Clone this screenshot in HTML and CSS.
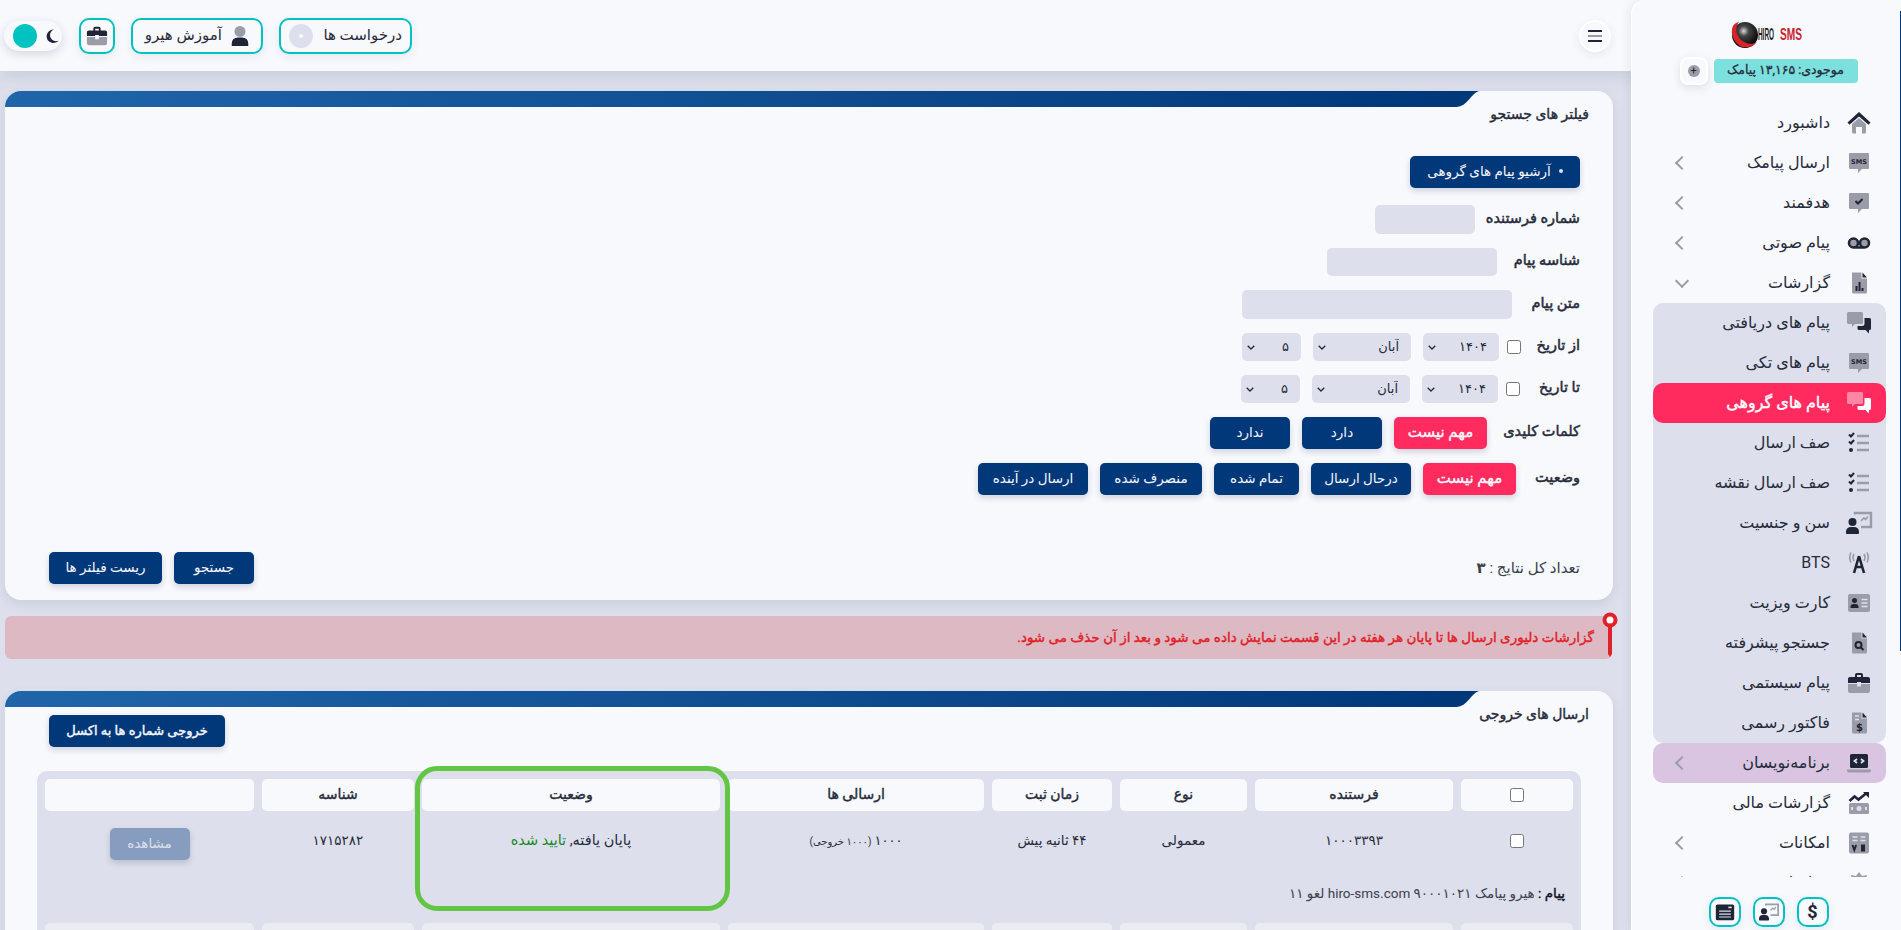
FILE: index.html
```html
<!DOCTYPE html>
<html lang="fa" dir="rtl">

<head>
    <meta charset="UTF-8">
    <meta name="viewport" content="width=device-width, initial-scale=1.0">
    <title>هیرو پیامک</title>
    <link rel="stylesheet" href="styles.css">
</head>

<body>
    <!-- آیکون ها -->
    <svg class="icon-defs" aria-hidden="true">
        <symbol id="i-home" viewBox="0 0 24 24">
            <path class="ig" d="M5 13l7-6 7 6v8a1.500 1.500 0 0 1-1.500 1.500H15V16H9v6.500H6.500A1.500 1.500 0 0 1 5 21z" />
            <path class="id" d="M12 1l11.500 10.500-2 2.200L12 5.500l-9.500 8.200-2-2.200z" />
        </symbol>
        <symbol id="i-sms" viewBox="0 0 24 24">
            <path class="ig" d="M3 2h18a1 1 0 0 1 1 1v14a1 1 0 0 1-1 1h-6l-4 4v-4H3a1 1 0 0 1-1-1V3a1 1 0 0 1 1-1z" />
            <text class="id icon-text" x="12" y="12.500" text-anchor="middle">SMS</text>
        </symbol>
        <symbol id="i-check" viewBox="0 0 24 24">
            <path class="ig" d="M3 2h18a1 1 0 0 1 1 1v14a1 1 0 0 1-1 1h-6l-4 4v-4H3a1 1 0 0 1-1-1V3a1 1 0 0 1 1-1z" />
            <path class="is" d="M8.500 10l2.500 2.500 4.500-4.500" />
        </symbol>
        <symbol id="i-voice" viewBox="0 0 24 24">
            <circle class="ig" cx="6.500" cy="12" r="4" />
            <circle class="ig" cx="17.500" cy="12" r="4" />
            <path class="is is-thick" d="M6.500 16.500h11M6.500 7.500a4.500 4.500 0 1 0 0 9 4.500 4.500 0 0 0 0-9zM17.500 7.500a4.500 4.500 0 1 0 0 9 4.500 4.500 0 0 0 0-9z" />
        </symbol>
        <symbol id="i-file-chart" viewBox="0 0 24 24">
            <path class="ig" d="M5 1.500h9.500v6H20V21a1.500 1.500 0 0 1-1.500 1.500h-12A1.500 1.500 0 0 1 5 21z" />
            <path class="id" d="M15.500 1.500l4.500 5h-4.500zM8.500 15h2v5h-2zM11.500 11h2v9h-2zM14.500 17h2v3h-2z" />
        </symbol>
        <symbol id="i-comments" viewBox="0 0 26 24">
            <path class="ig" d="M2.500 1h13A1.500 1.500 0 0 1 17 2.500v9a1.500 1.500 0 0 1-1.500 1.500H9l-3 3v-3H2.500A1.500 1.500 0 0 1 1 11.500v-9A1.500 1.500 0 0 1 2.500 1z" />
            <path class="id" d="M18.500 7h5A1.500 1.500 0 0 1 25 8.500v9a1.500 1.500 0 0 1-1.500 1.500H23v3.500L19.500 19H13a1.500 1.500 0 0 1-1.500-1.500V15H16a2.500 2.500 0 0 0 2.500-2.500z" />
        </symbol>
        <symbol id="i-list" viewBox="0 0 24 24">
            <path class="is" d="M2 3.500l2 2 3-3.500M2 10.500l2 2 3-3.500" />
            <circle class="id" cx="4" cy="19" r="2" />
            <path class="ig-line" d="M10 5h12M10 12h12M10 19h12" />
        </symbol>
        <symbol id="i-board" viewBox="0 0 26 24">
            <path class="ig-line" d="M9 3.500V2h16v14H15" />
            <path class="ig-line ig-thin" d="M15 10l3-3 1.500 1.500L22 5.500" />
            <circle class="id" cx="6.500" cy="11" r="4" />
            <path class="id" d="M0 22v-1.500A5 5 0 0 1 5 16h3a5 5 0 0 1 5 4.500V22a1 1 0 0 1-1 1H1a1 1 0 0 1-1-1z" />
        </symbol>
        <symbol id="i-tower" viewBox="0 0 24 24">
            <path class="ig-line ig-thin" d="M4 1.500a11 11 0 0 0 0 10M20 1.500a11 11 0 0 1 0 10M7 3a7 7 0 0 0 0 7M17 3a7 7 0 0 1 0 7" />
            <path class="is is-thick" d="M12 5l-5 17M12 5l5 17M8.500 16h7" />
        </symbol>
        <symbol id="i-card" viewBox="0 0 24 24">
            <rect class="ig" x="1" y="3" width="22" height="18" rx="2" />
            <circle class="id" cx="7.500" cy="9.500" r="2.500" />
            <path class="id" d="M3.500 17v-1a3 3 0 0 1 3-3h2a3 3 0 0 1 3 3v1z" />
            <path class="iw-line" d="M14.500 8.500h6M14.500 12h6M14.500 15.500h6" />
        </symbol>
        <symbol id="i-file-search" viewBox="0 0 24 24">
            <path class="ig" d="M5 1.500h9.500v6H20V21a1.500 1.500 0 0 1-1.500 1.500h-12A1.500 1.500 0 0 1 5 21z" />
            <path class="id" d="M15.500 1.500l4.500 5h-4.500z" />
            <circle class="is" cx="11.500" cy="14" r="3" />
            <path class="is" d="M13.700 16.200l2.800 2.800" />
        </symbol>
        <symbol id="i-case" viewBox="0 0 24 24">
            <path class="ig" d="M1 13h9v2.500h4V13h9v7a2 2 0 0 1-2 2H3a2 2 0 0 1-2-2z" />
            <path class="id" d="M8 6V4a2 2 0 0 1 2-2h4a2 2 0 0 1 2 2v2h5a2 2 0 0 1 2 2v4h-9v-1h-4v1H1V8a2 2 0 0 1 2-2zm2 0h4V4h-4z" />
        </symbol>
        <symbol id="i-invoice" viewBox="0 0 24 24">
            <path class="ig" d="M5 1.500h9.500v6H20V21a1.500 1.500 0 0 1-1.500 1.500h-12A1.500 1.500 0 0 1 5 21z" />
            <path class="id" d="M15.500 1.500l4.500 5h-4.500z" />
            <path class="iw-line" d="M8 5h4M8 8.500h4" />
            <text class="id icon-dollar" x="12.500" y="19.500" text-anchor="middle">$</text>
        </symbol>
        <symbol id="i-laptop" viewBox="0 0 26 24">
            <rect class="id" x="4" y="3" width="18" height="14" rx="1.500" />
            <path class="ig" d="M1 18.500h24v1a2 2 0 0 1-2 2H3a2 2 0 0 1-2-2z" />
            <path class="iw-line iw-code" d="M11 8l-2.500 2 2.500 2M15 8l2.500 2-2.500 2" />
        </symbol>
        <symbol id="i-money" viewBox="0 0 24 24">
            <rect class="ig" x="2" y="12" width="20" height="11" rx="1.500" />
            <circle class="iw" cx="12" cy="17.500" r="2.500" />
            <path class="iw" d="M4 16h2v3H4zM18 16h2v3h-2z" />
            <path class="is is-thick" d="M2.500 10l5-4.500 4 3L19 2.500" />
            <path class="id" d="M16 1h6v6z" />
        </symbol>
        <symbol id="i-calc" viewBox="0 0 24 24">
            <rect class="ig" x="2" y="1.500" width="20" height="21" rx="2" />
            <path class="iw-line" d="M5.500 6h5M13.500 6h5M5.500 9.500h5M13.500 9.500h5" />
            <path class="is" d="M5.500 14l1.800 5 1.800-5" />
            <path class="id" d="M14 13.500h4v7h-4z" />
        </symbol>
        <symbol id="i-gear" viewBox="0 0 24 24">
            <path class="ig" d="M12 1l3 4 5-1-1 5 4 3-4 3 1 5-5-1-3 4-3-4-5 1 1-5-4-3 4-3-1-5 5 1z" />
        </symbol>
        <symbol id="i-user" viewBox="0 0 24 24">
            <circle class="ig" cx="12" cy="7" r="6" />
            <path class="id" d="M3 23v-3a6.500 6.500 0 0 1 6.500-6.500h5A6.500 6.500 0 0 1 21 20v3z" />
        </symbol>
        <symbol id="i-window" viewBox="0 0 24 24">
            <path class="id" d="M3 3h18a2 2 0 0 1 2 2v15a2 2 0 0 1-2 2H3a2 2 0 0 1-2-2V5a2 2 0 0 1 2-2z" />
            <path class="iw-line" d="M5 11h14M5 14.500h14M5 18h14" />
            <path class="iw" d="M16 5.500h4v2h-4z" />
        </symbol>
    </svg>

    <div class="layout">
        <!-- منوی کناری -->
        <aside class="sidebar">
            <span class="scroll-thumb"></span>

            <div class="logo">
                <svg width="72" height="30" viewBox="0 0 72 30">
                    <defs>
                        <radialGradient id="ball" cx="45%" cy="35%" r="65%">
                            <stop offset="0" stop-color="#d9d9d9" />
                            <stop offset="0.3" stop-color="#444" />
                            <stop offset="1" stop-color="#000" />
                        </radialGradient>
                    </defs>
                    <circle cx="15" cy="15" r="13" fill="url(#ball)" />
                    <path d="M2 9C3 4 7 2 9 2 5 6 5 14 11 20c5 4 11 5 16 2-4 5-10 6-15 5C5 24 1 16 2 9z" fill="#d8232a" />
                    <text class="logo-hiro" x="28" y="20" textLength="16" lengthAdjust="spacingAndGlyphs">HIRO</text>
                    <text class="logo-sms" x="50" y="20" textLength="22" lengthAdjust="spacingAndGlyphs">SMS</text>
                </svg>
            </div>

            <div class="balance-row">
                <div class="balance">موجودی: ۱۳,۱۶۵ پیامک</div>
                <button class="balance-add"><span>+</span></button>
            </div>

            <nav class="menu">
                <a class="menu-item"><svg class="menu-icon"><use href="#i-home" /></svg><span>داشبورد</span></a>
                <a class="menu-item has-arrow"><svg class="menu-icon"><use href="#i-sms" /></svg><span>ارسال پیامک</span><i class="arrow"></i></a>
                <a class="menu-item has-arrow"><svg class="menu-icon"><use href="#i-check" /></svg><span>هدفمند</span><i class="arrow"></i></a>
                <a class="menu-item has-arrow"><svg class="menu-icon"><use href="#i-voice" /></svg><span>پیام صوتی</span><i class="arrow"></i></a>
                <a class="menu-item has-arrow"><svg class="menu-icon"><use href="#i-file-chart" /></svg><span>گزارشات</span><i class="arrow arrow-down"></i></a>

                <div class="submenu">
                    <a class="menu-item"><svg class="menu-icon"><use href="#i-comments" /></svg><span>پیام های دریافتی</span></a>
                    <a class="menu-item"><svg class="menu-icon"><use href="#i-sms" /></svg><span>پیام های تکی</span></a>
                    <a class="menu-item active"><svg class="menu-icon"><use href="#i-comments" /></svg><span>پیام های گروهی</span></a>
                    <a class="menu-item"><svg class="menu-icon"><use href="#i-list" /></svg><span>صف ارسال</span></a>
                    <a class="menu-item"><svg class="menu-icon"><use href="#i-list" /></svg><span>صف ارسال نقشه</span></a>
                    <a class="menu-item"><svg class="menu-icon"><use href="#i-board" /></svg><span>سن و جنسیت</span></a>
                    <a class="menu-item"><svg class="menu-icon"><use href="#i-tower" /></svg><span>BTS</span></a>
                    <a class="menu-item"><svg class="menu-icon"><use href="#i-card" /></svg><span>کارت ویزیت</span></a>
                    <a class="menu-item"><svg class="menu-icon"><use href="#i-file-search" /></svg><span>جستجو پیشرفته</span></a>
                    <a class="menu-item"><svg class="menu-icon"><use href="#i-case" /></svg><span>پیام سیستمی</span></a>
                    <a class="menu-item"><svg class="menu-icon"><use href="#i-invoice" /></svg><span>فاکتور رسمی</span></a>
                </div>

                <a class="menu-item has-arrow dev"><svg class="menu-icon"><use href="#i-laptop" /></svg><span>برنامه‌نویسان</span><i class="arrow"></i></a>
                <a class="menu-item"><svg class="menu-icon"><use href="#i-money" /></svg><span>گزارشات مالی</span></a>
                <a class="menu-item has-arrow"><svg class="menu-icon"><use href="#i-calc" /></svg><span>امکانات</span><i class="arrow"></i></a>
                <a class="menu-item has-arrow"><svg class="menu-icon"><use href="#i-gear" /></svg><span>تنظیمات</span><i class="arrow"></i></a>
            </nav>

            <div class="side-footer">
                <button class="square-btn square-small"><span class="dollar">$</span></button>
                <button class="square-btn square-small"><svg class="foot-icon"><use href="#i-board" /></svg></button>
                <button class="square-btn square-small"><svg class="foot-icon"><use href="#i-window" /></svg></button>
            </div>
        </aside>

        <div class="main">
            <!-- نوار بالا -->
            <header class="topbar">
                <button class="hamburger"><i></i><i></i><i></i></button>
                <div class="top-actions">
                    <button class="top-btn top-requests">
                        <span>درخواست ها</span>
                        <span class="disc"><i></i></span>
                    </button>
                    <button class="top-btn top-learn">
                        <svg class="top-icon"><use href="#i-user" /></svg>
                        <span>آموزش هیرو</span>
                    </button>
                    <button class="square-btn"><svg class="top-icon"><use href="#i-case" /></svg></button>
                    <div class="theme-toggle">
                        <svg class="moon" viewBox="0 0 24 24"><path d="M15 1A11.500 11.500 0 1 0 23 20 9.500 9.500 0 0 1 15 1z" /></svg>
                        <span class="knob"></span>
                    </div>
                </div>
            </header>

            <div class="content">
                <!-- فیلترها -->
                <section class="card">
                    <div class="card-strip">
                        <div class="strip-bar"></div>
                        <svg class="strip-end" width="24" height="16" viewBox="0 0 24 16"><path d="M0 0H24C15 1 12 16 0 16Z" /></svg>
                    </div>
                    <h2 class="card-title">فیلتر های جستجو</h2>

                    <div class="filters">
                        <button class="btn btn-archive"><span class="dot"></span>آرشیو پیام های گروهی</button>

                        <div class="filter-row">
                            <label class="filter-label w-105">شماره فرستنده</label>
                            <input class="field f-100" type="text">
                        </div>
                        <div class="filter-row">
                            <label class="filter-label w-83">شناسه پیام</label>
                            <input class="field f-170" type="text">
                        </div>
                        <div class="filter-row">
                            <label class="filter-label w-68">متن پیام</label>
                            <input class="field f-270" type="text">
                        </div>
                        <div class="filter-row date-row">
                            <label class="filter-label w-59">از تاریخ</label>
                            <input class="check" type="checkbox">
                            <select class="field pick pick-year"><option>۱۴۰۴</option></select>
                            <select class="field pick pick-month"><option>آبان</option></select>
                            <select class="field pick pick-day"><option>۵</option></select>
                        </div>
                        <div class="filter-row date-row">
                            <label class="filter-label w-60">تا تاریخ</label>
                            <input class="check" type="checkbox">
                            <select class="field pick pick-year"><option>۱۴۰۴</option></select>
                            <select class="field pick pick-month"><option>آبان</option></select>
                            <select class="field pick pick-day"><option>۵</option></select>
                        </div>
                        <div class="filter-row btn-row">
                            <label class="filter-label w-93">کلمات کلیدی</label>
                            <button class="btn btn-pink b-93">مهم نیست</button>
                            <button class="btn b-80">دارد</button>
                            <button class="btn b-80">ندارد</button>
                        </div>
                        <div class="filter-row btn-row">
                            <label class="filter-label w-64">وضعیت</label>
                            <button class="btn btn-pink b-93">مهم نیست</button>
                            <button class="btn b-100">درحال ارسال</button>
                            <button class="btn b-85">تمام شده</button>
                            <button class="btn b-102">منصرف شده</button>
                            <button class="btn b-110">ارسال در آینده</button>
                        </div>

                        <div class="filter-bottom">
                            <div class="result-count">تعداد کل نتایج : <b>۳</b></div>
                            <div class="bottom-btns">
                                <button class="btn b-80">جستجو</button>
                                <button class="btn b-113">ریست فیلتر ها</button>
                            </div>
                        </div>
                    </div>
                </section>

                <!-- هشدار -->
                <div class="alert">
                    <span>گزارشات دلیوری ارسال ها تا پایان هر هفته در این قسمت نمایش داده می شود و بعد از آن حذف می شود.</span>
                    <svg class="alert-pin" width="16" height="46" viewBox="0 0 16 46">
                        <circle cx="8" cy="8" r="5.500" fill="#fff" stroke="#e02127" stroke-width="4" />
                        <path d="M6 14h4v28l-2 3-2-3z" fill="#e02127" />
                    </svg>
                </div>

                <!-- ارسال ها -->
                <section class="card">
                    <div class="card-strip">
                        <div class="strip-bar"></div>
                        <svg class="strip-end" width="24" height="16" viewBox="0 0 24 16"><path d="M0 0H24C15 1 12 16 0 16Z" /></svg>
                    </div>
                    <div class="card-head">
                        <h2 class="card-title card-title-flat">ارسال های خروجی</h2>
                        <button class="btn btn-bold b-176">خروجی شماره ها به اکسل</button>
                    </div>

                    <div class="table-wrap">
                        <table class="sends">
                            <colgroup>
                                <col class="c-check"><col class="c-sender"><col class="c-type"><col class="c-time">
                                <col class="c-sent"><col class="c-status"><col class="c-id"><col class="c-view">
                            </colgroup>
                            <thead>
                                <tr>
                                    <th><input class="check" type="checkbox"></th>
                                    <th>فرستنده</th>
                                    <th>نوع</th>
                                    <th>زمان ثبت</th>
                                    <th>ارسالی ها</th>
                                    <th>وضعیت</th>
                                    <th>شناسه</th>
                                    <th></th>
                                </tr>
                            </thead>
                            <tbody>
                                <tr class="data-row">
                                    <td><input class="check" type="checkbox"></td>
                                    <td class="cell-big">۱۰۰۰۳۳۹۳</td>
                                    <td>معمولی</td>
                                    <td>۴۴ ثانیه پیش</td>
                                    <td class="cell-sent">۱۰۰۰ <small>(۱۰۰۰ خروجی)</small></td>
                                    <td class="cell-status">پایان یافته, <span class="ok">تایید شده</span></td>
                                    <td class="cell-big">۱۷۱۵۲۸۲</td>
                                    <td><button class="btn btn-faded">مشاهده</button></td>
                                </tr>
                                <tr class="msg-row">
                                    <td colspan="8"><b>پیام :</b> هیرو پیامک ۹۰۰۰۱۰۲۱ hiro-sms.com لغو ۱۱</td>
                                </tr>
                                <tr class="next-row">
                                    <td></td><td></td><td></td><td></td><td></td><td></td><td></td><td></td>
                                </tr>
                            </tbody>
                        </table>
                        <div class="highlight"></div>
                    </div>
                </section>
            </div>
        </div>
    </div>
</body>

</html>
```

FILE: styles.css
```css
* {
    box-sizing: border-box;
}

body,
html {
    margin: 0;
    padding: 0;
    height: 100%;
    overflow: hidden;
    font-family: Roboto, 'DejaVu Sans', sans-serif;
    color: #262b3a;
    background-color: #dde0ec;
}

button {
    font-family: inherit;
    cursor: pointer;
}

.icon-defs {
    position: absolute;
    width: 0;
    height: 0;
}

/* رنگ آیکون ها */
.id {
    fill: var(--icon-dark, #1f2536);
}

.ig {
    fill: var(--icon-gray, #9a9ca8);
}

.iw {
    fill: #dde0ec;
}

.is {
    fill: none;
    stroke: var(--icon-dark, #1f2536);
    stroke-width: 2;
}

.is-thick {
    stroke-width: 2.6;
}

.ig-line {
    fill: none;
    stroke: var(--icon-gray, #9a9ca8);
    stroke-width: 2.4;
}

.ig-thin {
    stroke-width: 1.6;
}

.iw-line {
    fill: none;
    stroke: #dde0ec;
    stroke-width: 1.4;
}

.iw-code {
    stroke-width: 1.8;
}

.icon-text {
    font: bold 6.500px 'DejaVu Sans', sans-serif;
}

.icon-dollar {
    font: bold 10px 'DejaVu Sans', sans-serif;
}

.layout {
    display: flex;
    height: 100%;
}

/* منوی کناری */
.sidebar {
    position: relative;
    flex: 0 0 269px;
    height: 100%;
    padding-top: 20px;
    background-color: #f8f9fd;
    border-top-left-radius: 14px;
    box-shadow: -1px 0 0 #fff, -3px 0 10px rgba(30, 40, 80, 0.08);
    z-index: 2;
    display: flex;
    flex-direction: column;
}

.scroll-thumb {
    position: absolute;
    top: 11px;
    right: 0;
    width: 1px;
    height: 640px;
    background-color: #00387a;
}

.logo {
    height: 30px;
    display: flex;
    justify-content: center;
    padding-right: 2px;
}

.logo svg {
    direction: ltr;
}

.logo-hiro {
    font: bold 16px 'Liberation Sans', sans-serif;
    fill: #222;
}

.logo-sms {
    font: bold 16px 'Liberation Sans', sans-serif;
    fill: #c8232b;
}

.balance-row {
    display: flex;
    justify-content: center;
    align-items: center;
    gap: 6px;
    height: 28px;
    margin-top: 7px;
    margin-left: 4px;
}

.balance {
    width: 144px;
    height: 24px;
    line-height: 22px;
    text-align: center;
    font-size: 12.500px;
    -webkit-text-stroke: 0.3px currentColor;
    background-color: #7ce0de;
    border-radius: 4px;
}

.balance-add {
    width: 28px;
    height: 28px;
    padding: 0;
    border: 2px solid #fff;
    border-radius: 8px;
    background-color: #f8f9fd;
    box-shadow: 0 3px 10px rgba(30, 40, 80, 0.12);
    display: flex;
    align-items: center;
    justify-content: center;
}

.balance-add span {
    width: 12px;
    height: 12px;
    line-height: 11px;
    font-size: 11px;
    border-radius: 50%;
    background-color: #9a9ca8;
    color: #1f2536;
}

.menu {
    flex: 1;
    margin: 18px 15px 0 21px;
    overflow: hidden;
    min-height: 0;
}

.menu-item {
    height: 40px;
    padding: 0 13px 0 24px;
    display: flex;
    align-items: center;
    gap: 15px;
    font-size: 16px;
}

.menu-item span {
    padding-bottom: 2px;
}

.menu-icon {
    flex: 0 0 28px;
    width: 28px;
    height: 24px;
}

.arrow {
    margin-right: auto;
    width: 10px;
    height: 10px;
    border-left: 2px solid #9a9ca8;
    border-bottom: 2px solid #9a9ca8;
    transform: rotate(45deg);
}

.arrow-down {
    transform: rotate(-45deg);
    margin-top: -5px;
}

.submenu {
    background-color: #dde0ec;
    border-radius: 10px;
}

.menu-item.active {
    background-color: #ff2a5d;
    border-radius: 10px;
    color: #fff;
    -webkit-text-stroke: 0.4px #fff;
    --icon-dark: #fff;
    --icon-gray: #ff86a4;
}

.menu-item.dev {
    background-color: #d9c5e2;
    border-radius: 10px;
}

.side-footer {
    flex: 0 0 53px;
    padding-top: 20px;
    display: flex;
    justify-content: center;
    align-items: flex-start;
    gap: 12px;
    margin-left: 4px;
}

.square-btn {
    width: 36px;
    height: 36px;
    padding: 0;
    background-color: #f8f9fd;
    border: 2px solid #00c2c0;
    border-radius: 10px;
    display: flex;
    align-items: center;
    justify-content: center;
    box-shadow: 0 3px 10px rgba(30, 40, 80, 0.08);
}

.square-small {
    width: 32px;
    height: 30px;
}

.foot-icon {
    width: 20px;
    height: 20px;
}

.dollar {
    font-size: 18px;
    font-weight: bold;
    line-height: 1;
    color: #1f2536;
}

/* بخش اصلی */
.main {
    flex: 1;
    min-width: 0;
    height: 100%;
}

.topbar {
    position: relative;
    height: 71px;
    margin-right: -14px;
    padding: 0 35px 0 4px;
    display: flex;
    align-items: center;
    justify-content: space-between;
    background-color: #f8f9fd;
    box-shadow: 0 4px 18px rgba(30, 40, 80, 0.12);
    z-index: 1;
}

.hamburger {
    width: 32px;
    height: 32px;
    padding: 0;
    border: 2px solid #fff;
    border-radius: 50%;
    background-color: #f8f9fd;
    box-shadow: 0 3px 10px rgba(30, 40, 80, 0.08);
    display: flex;
    flex-direction: column;
    align-items: center;
    justify-content: center;
    gap: 3px;
}

.hamburger i {
    display: block;
    width: 14px;
    height: 2px;
    background-color: #1f2536;
}

.hamburger i:nth-child(2) {
    background-color: #9a9ca8;
}

.top-actions {
    display: flex;
    align-items: center;
    gap: 16px;
}

.top-btn {
    height: 36px;
    background-color: #f8f9fd;
    border: 2px solid #00c2c0;
    border-radius: 10px;
    display: flex;
    align-items: center;
    font-size: 15px;
    white-space: nowrap;
    color: #262b3a;
    box-shadow: 0 3px 10px rgba(30, 40, 80, 0.08);
}

.top-btn > span:first-child,
.top-learn span {
    padding-bottom: 2px;
}

.top-requests {
    width: 133px;
    padding: 0 8px;
    justify-content: space-between;
}

.top-learn {
    width: 132px;
    padding: 0 10px;
    gap: 7px;
}

.disc {
    width: 24px;
    height: 24px;
    border-radius: 50%;
    background-color: #dde0ec;
    display: flex;
    align-items: center;
    justify-content: center;
}

.disc i {
    width: 4px;
    height: 4px;
    border-radius: 50%;
    background-color: #f8f9fd;
}

.top-icon {
    flex: 0 0 22px;
    width: 22px;
    height: 22px;
}

.theme-toggle {
    width: 58px;
    height: 30px;
    padding: 0 3px 0 9px;
    display: flex;
    align-items: center;
    justify-content: space-between;
    background-color: #f8f9fd;
    border-radius: 15px;
    box-shadow: 0 3px 10px rgba(30, 40, 80, 0.16);
    margin-right: 1px;
}

.moon {
    width: 14px;
    height: 14px;
    fill: #1f2536;
}

.knob {
    width: 24px;
    height: 24px;
    border-radius: 50%;
    background-color: #00c2c0;
}

.content {
    padding: 20px 19px 0 5px;
}

.card {
    background-color: #f8f9fd;
    border-radius: 16px;
    box-shadow: 0 4px 12px rgba(30, 40, 80, 0.1);
    overflow: hidden;
}

.card-strip {
    direction: ltr;
    height: 16px;
    padding-right: 133px;
    display: flex;
}

.strip-bar {
    flex: 1;
    background: linear-gradient(90deg, #2065aa, #00387a);
}

.strip-end {
    display: block;
    fill: #00387a;
}

.card-title {
    margin: 0;
    padding: 0 24px;
    font-size: 14px;
    line-height: 14px;
    font-weight: normal;
    -webkit-text-stroke: 0.4px currentColor;
}

.card-title-flat {
    padding: 0;
}

/* فیلترها */
.filters {
    padding: 35px 33px 16px 44px;
    display: flex;
    flex-direction: column;
    align-items: flex-start;
    gap: 14px;
}

.filter-row {
    display: flex;
    align-items: center;
}

.filter-label {
    font-size: 14.500px;
    padding-bottom: 3px;
    -webkit-text-stroke: 0.5px currentColor;
    white-space: nowrap;
}

.w-105 { width: 105px; }
.w-83 { width: 83px; }
.w-68 { width: 68px; }
.w-59 { width: 59px; }
.w-60 { width: 60px; }
.w-93 { width: 93px; }
.w-64 { width: 64px; }

.field {
    height: 29px;
    border: none;
    border-radius: 5px;
    background-color: #dde0ec;
    font-family: inherit;
    color: #262b3a;
}

.f-100 { width: 100px; }
.f-170 { width: 170px; height: 28px; }
.f-270 { width: 270px; }

.date-row {
    height: 28px;
}

.check {
    width: 14px;
    height: 14px;
    margin: 0 0 0 8px;
    flex: 0 0 14px;
}

.pick {
    appearance: none;
    height: 28px;
    font-size: 13px;
    margin-left: 12px;
    padding: 0 12px 2px 18px;
    background-image: url("data:image/svg+xml,%3Csvg xmlns='http://www.w3.org/2000/svg' width='8' height='5' viewBox='0 0 8 5'%3E%3Cpath d='M.7.7 4 4 7.300.7' fill='none' stroke='%23262b3a' stroke-width='1.300'/%3E%3C/svg%3E");
    background-repeat: no-repeat;
    background-position: left 5px center;
}

.pick-year { width: 76px; }
.pick-month { width: 98px; }
.pick-day { width: 59px; }

.btn {
    height: 32px;
    padding: 0 0 2px;
    border: none;
    border-radius: 5px;
    background-color: #00387a;
    color: #f8f9fd;
    font-size: 13.500px;
    box-shadow: 0 3px 6px rgba(30, 40, 80, 0.18);
}

.btn-archive {
    width: 170px;
    display: flex;
    align-items: center;
    justify-content: center;
    gap: 8px;
    font-size: 13.500px;
    margin-bottom: 3px;
}

.dot {
    width: 4px;
    height: 4px;
    border-radius: 50%;
    background-color: #dde0ec;
}

.btn-pink {
    background-color: #ff2a5d;
    font-size: 15px;
    -webkit-text-stroke: 0.4px currentColor;
}

.btn-bold {
    font-size: 13px;
    -webkit-text-stroke: 0.4px currentColor;
}

.btn-row {
    gap: 12px;
}

.btn-row .filter-label {
    margin-left: -12px;
}

.b-80 { width: 80px; }
.b-85 { width: 85px; }
.b-93 { width: 93px; }
.b-100 { width: 100px; }
.b-102 { width: 102px; }
.b-110 { width: 110px; }
.b-113 { width: 113px; }
.b-176 { width: 176px; }

.filter-bottom {
    align-self: stretch;
    margin-top: 43px;
    display: flex;
    align-items: center;
    justify-content: space-between;
    font-size: 15px;
    color: #3a3f4e;
}

.bottom-btns {
    display: flex;
    gap: 12px;
}

/* هشدار */
.alert {
    position: relative;
    height: 43px;
    margin: 16px 1px 32px 0;
    padding: 0 18px 2px 0;
    display: flex;
    align-items: center;
    background-color: #ddbac3;
    border-radius: 6px;
    color: #e02127;
    font-size: 13.500px;
    -webkit-text-stroke: 0.4px currentColor;
}

.alert-pin {
    position: absolute;
    top: -4px;
    right: -6px;
}

/* جدول ارسال ها */
.card-head {
    padding: 0 32px 0 44px;
    display: flex;
    justify-content: space-between;
    align-items: flex-start;
}

.card-head .btn {
    margin-top: 8px;
}

.card-head .card-title {
    margin-right: -8px;
}

.table-wrap {
    position: relative;
    margin: 24px 32px 0;
    background-color: #dde0ec;
    border-radius: 10px 10px 0 0;
}

.sends {
    width: 100%;
    table-layout: fixed;
    border-collapse: separate;
    border-spacing: 8px;
    font-size: 13.500px;
}

.c-check { width: 112px; }
.c-sender { width: 198px; }
.c-type { width: 127px; }
.c-time { width: 120px; }
.c-sent { width: 256px; }
.c-status { width: 298px; }
.c-id { width: 152px; }
.c-view { width: 209px; }

.sends th {
    height: 32px;
    padding: 0 0 2px;
    background-color: #f8f9fd;
    border-radius: 5px;
    font-size: 14px;
    font-weight: normal;
    -webkit-text-stroke: 0.4px currentColor;
    text-align: center;
}

.sends th .check,
.sends td .check {
    margin: 0;
    vertical-align: middle;
}

.data-row td {
    height: 56px;
    padding: 0 0 14px;
    text-align: center;
}

.cell-big {
    font-size: 13.500px;
}

.cell-sent {
    font-size: 13px;
}

.cell-status {
    font-size: 14.500px;
}

.cell-sent small {
    font-size: 10px;
}

.ok {
    color: #15891f;
}

.btn-faded {
    width: 80px;
    background-color: #869dbf;
    color: #dde0ec;
}

.data-row td:last-child {
    padding: 0 0 6px;
}

.msg-row td {
    height: 32px;
    padding: 0 8px 12px 0;
    font-size: 13.500px;
    vertical-align: middle;
    color: #3a3f4e;
}

.msg-row b {
    font-weight: normal;
    -webkit-text-stroke: 0.4px currentColor;
    color: #11141e;
}

.next-row td {
    height: 32px;
    background-color: #ebecf1;
    border-radius: 5px;
}

.highlight {
    position: absolute;
    top: -5px;
    left: 378px;
    width: 315px;
    height: 145px;
    border: 5px solid #62c544;
    border-radius: 22px;
}
```
